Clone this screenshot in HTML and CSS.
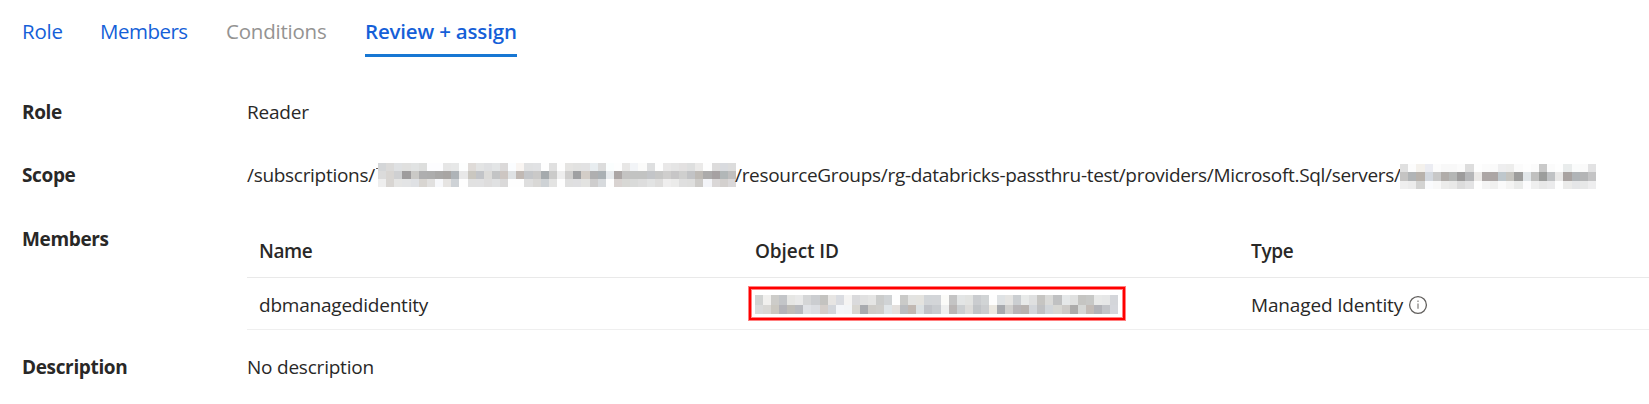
FILE: index.html
```html
<!DOCTYPE html>
<html lang="en">
<head>
<meta charset="utf-8">
<title>Add role assignment</title>
<link rel="stylesheet" href="styles.css">
</head>
<body>
<nav class="tabs">
  <a class="tab tab-role">Role</a>
  <a class="tab tab-members">Members</a>
  <a class="tab tab-conditions">Conditions</a>
  <a class="tab tab-review">Review + assign</a>
</nav>
<main class="summary">
  <div class="row row-role"><div class="label">Role</div><div class="value">Reader</div></div>
  <div class="row row-scope"><div class="label">Scope</div>
    <div class="value scope"><span class="sub">/subscriptions/</span><svg class="mosaic" data-mosaic="subscription" width="358" height="24"><rect x="-2" y="5" width="2" height="1" fill="#6b5f58"/></svg><span class="path">/resourceGroups/rg-databricks-passthru-test/providers/Microsoft.Sql/servers/</span><svg class="mosaic mosaic-server" data-mosaic="server" width="196" height="25"></svg></div>
  </div>
  <div class="row row-members"><div class="label">Members</div>
    <div class="table">
      <div class="tr th"><span>Name</span><span class="th-object">Object ID</span><span class="th-type">Type</span></div>
      <div class="tr td"><span class="member">dbmanagedidentity</span>
        <span class="object-id"><svg class="mosaic" data-mosaic="object" width="363" height="19"></svg></span>
        <span class="type"><span class="type-text">Managed Identity</span><svg class="info" width="20" height="20" viewBox="0 0 20 20"><circle cx="10" cy="10" r="8.4"/><path d="M10 8.5v5.2M10 5.4v1.7"/></svg></span></div>
    </div>
  </div>
  <div class="row row-description"><div class="label">Description</div><div class="value">No description</div></div>
</main>
<script src="mosaic.js"></script>
</body>
</html>
```
FILE: styles.css
```css
* { box-sizing: border-box; }
body {
  margin: 0;
  height: 404px;
  overflow: hidden;
  background: #fff;
  color: #292827;
  font: 19px/28px "Segoe UI", "Open Sans", "Noto Sans", sans-serif;
  letter-spacing: -0.22px;
  white-space: nowrap;
}
.tabs { display: flex; padding: 16px 0 0 22px; height: 57px; font-size: 20.5px; line-height: 30px; color: #155fd8; }
.tab { height: 41px; }
.tab-role { width: 78px; }
.tab-members { width: 126px; letter-spacing: -0.5px; }
.tab-conditions { width: 139px; color: #949392; }
.tab-review { width: 152px; font-weight: 600; letter-spacing: -0.18px; border-bottom: 3px solid #1777d3; }
.summary { padding: 41px 0 0 22px; }
.row { display: grid; grid-template-columns: 225px 1fr; }
.row-role, .row-scope { height: 63px; }
.row-members { height: 129px; }
.label { font-weight: 700; letter-spacing: -0.35px; }
.row-members .label { padding-top: 1px; }
.scope { display: flex; align-items: flex-start; }
.sub { width: 131px; letter-spacing: -0.3px; }
.path { width: 664px; margin: 0 1px 0 -1px; letter-spacing: -0.31px; }
.mosaic { display: block; flex: none; margin-top: 2px; overflow: visible; }
.mosaic-server { margin-top: 3px; }
.tr { display: grid; grid-template-columns: 496px 496px 1fr; padding-left: 12px; }
.th { height: 54px; padding-top: 13px; font-weight: 600; letter-spacing: -0.4px; border-bottom: 1px solid #e9e9e9; }
.th-object { letter-spacing: -0.1px; }
.th-type { letter-spacing: -0.3px; }
.td { height: 52px; padding-top: 9px; border-bottom: 1px solid #efefef; }
.member, .type-text { padding-top: 4px; }
.object-id { width: 376px; height: 33px; margin-left: -6px; padding: 6px 0 0 4px; border: 2px solid #f00; box-shadow: 0 0 0 1px #ff8080, inset 0 0 0 1px #ff8080; }
.object-id .mosaic { margin: 0; }
.type { display: flex; }
.type-text { width: 157px; letter-spacing: -0.15px; }
.info { margin-top: 8px; fill: none; stroke: #605e5c; stroke-width: 1.3; }
.info path { stroke: #8a8886; }
```
FILE: mosaic.js
```js
// Redacted values: one string of six-digit colours per mosaic row.
const mosaics = {
  subscription: { cuts: [0, 8, 16, 24], rows: [
    "d4d6d8 dbdad9 dfe1e3 e0e0df e1e3e3 dddedd fdfdff fdfdff e6e6e6 e7e8e8 fdfefe dfdbd8 e3e4e4 dfe0e2 e3e5e6 dbd9d9 fbfdff f9f5f2 e0e1e2 e1e2e4 fefefe e0e0e0 fefefe e5e4e2 e2e2e1 e2e2e3 e8edf0 dcdcdc fbfefe fefefe e8e7e6 f2f4f7 fbfbfa dedfe0 fefefe e9e8e8 e5e5e5 e3e1e1 dedfdf ebeae9 fefefe dddcdc d9dbdf dcdcdc",
    "dbdbdb d8d5d2 cfd0d2 9e9c9d cac9c6 aeaeaf adadad a9a8a7 a8a5a3 aeb3b7 e8e8e8 cac7c0 c2c4c8 dcdbd9 c3c4c5 cdc6c2 dfe2e4 c1b9b4 c4c6c9 cac9c8 a5aaad cbcbca eeeeee cfcecd 9fa0a2 d3cdc7 afafb0 aab0b4 e8ebee aca6a5 c4c3c2 c2c3c2 c2c3c2 c3c5c8 c7c7c6 cfcecd c7c6c7 cfcfce c2c3c5 bebab5 acabab a6a1a2 b2b7b8 c0bfbf",
    "eeeeee d8d5d2 e5e5e4 e3e4e5 dfe1e4 d8d5d1 e1e0df f7f8fb e6e4e2 ced2d6 fefefe e1e1e1 e1e1e2 dedddd e0e1e2 dad9d9 fefefe fefefe dedede d9d8d6 ced2d5 e3e3e2 fefefe dfdfdf dfdfe1 e3e3e1 cecdcd d7dadd fefefe d9d3d1 d8d8d5 d9dad9 dddddd e2e3e3 dedddc efeeee ebebea dfdfdf dededd cdcbc8 f3f4f8 dad7d7 d3d0ce dad8d9"] },
  server: { cuts: [0, 8, 17, 25], rows: [
    "e0e0e0 fcfcfc f4f1ec ebecf2 fcfcfc f8f8f8 f8f8f8 fbfbfb dddddd fefefe fbfbfb fafafa eeeeef ededec fbfbfb fefefe fbfbfb c9c9c9 fbfbfb fefefe e9ecec fafbfb fafafa e2e2e3",
    "c5c4c3 b1b4b6 b8b2ac d3d8df c8c8c8 b0aca9 b4b6b5 9d9c9c b5b6b8 ebe9e7 aca6a5 aca6a5 bec7cc c5c4bf 9d9d9c e1e6e9 c0c0bf 9c9d9c c0c2c4 e9e8e7 a9a3a1 b0b4b7 b4b5b6 c4c4c5",
    "efefef ececec d3d3d2 fafbfd f8f8f8 ececeb e9e9e8 dcdcdc e3e3e4 fefefe f4f4f4 f0f0ef fafafa f4f4f3 eaebea fcfcfd efefef e8e8e8 ebebec fefefe ebebea e5e6e8 e7e8e8 eeeeef"] },
  object: { cuts: [0, 10, 19], rows: [
    "d1d3d2 f1f0ee cdccc9 c3c5c8 e6e6e4 e9e9e9 d5d6d7 cbcdd0 c4c3c0 e7e5e3 dadce1 f5f4f3 dadadc e1e1e1 e5e5e4 cbcccb d0d3d5 fefefe cacac8 e3e3e1 e4e3df d2d5d8 d3d5d8 fbfbf8 c4c4c4 e3e5e5 e2e3e1 cacccf d1d4d5 fefefe dfe2e4 e5e4e2 cbced1 e8eae9 dfe0e0 c6c5c2 dadad8 c0c1c2 e5e8e9 e0e1e0 c5c5c2 c7c8c6 e8e9e8 e6e7e7 d4d6da",
    "dadbdb d9d8d5 cbc8c1 b4b4b9 bfbdb8 b8babf e0e2e6 dbdde1 d4ceca d3d6db f4f6f9 f3f5f7 d8d6d1 a9abaf ceccc8 cfcecb e0e5e8 e4e0dd bbbdc0 c1b8b2 dce1e3 c1c3c8 c8cbcf eff0ef bab6b5 cccfd1 dddcda c1c4c7 cbcdcf ebe8e1 a8aaae d0cfcd b8b5b7 b8b3b0 d3d6da c0c1c3 d1d5d9 d7d7d3 cdcbc8 acabaa d5d7d5 c3bcb7 b2b3b8 c2c4c8 d5d7dc"] }
};
document.querySelectorAll("[data-mosaic]").forEach(svg => {
  const { cuts, rows } = mosaics[svg.dataset.mosaic];
  const width = Number(svg.getAttribute("width"));
  rows.forEach((row, r) => {
    const colours = row.split(" ");
    colours.forEach((colour, c) => {
      const x = Math.round(c * width / colours.length);
      const end = Math.round((c + 1) * width / colours.length);
      const rect = document.createElementNS("http://www.w3.org/2000/svg", "rect");
      rect.setAttribute("x", x);
      rect.setAttribute("y", cuts[r]);
      rect.setAttribute("width", end - x);
      rect.setAttribute("height", cuts[r + 1] - cuts[r]);
      rect.setAttribute("fill", "#" + colour);
      svg.appendChild(rect);
    });
  });
});
```
